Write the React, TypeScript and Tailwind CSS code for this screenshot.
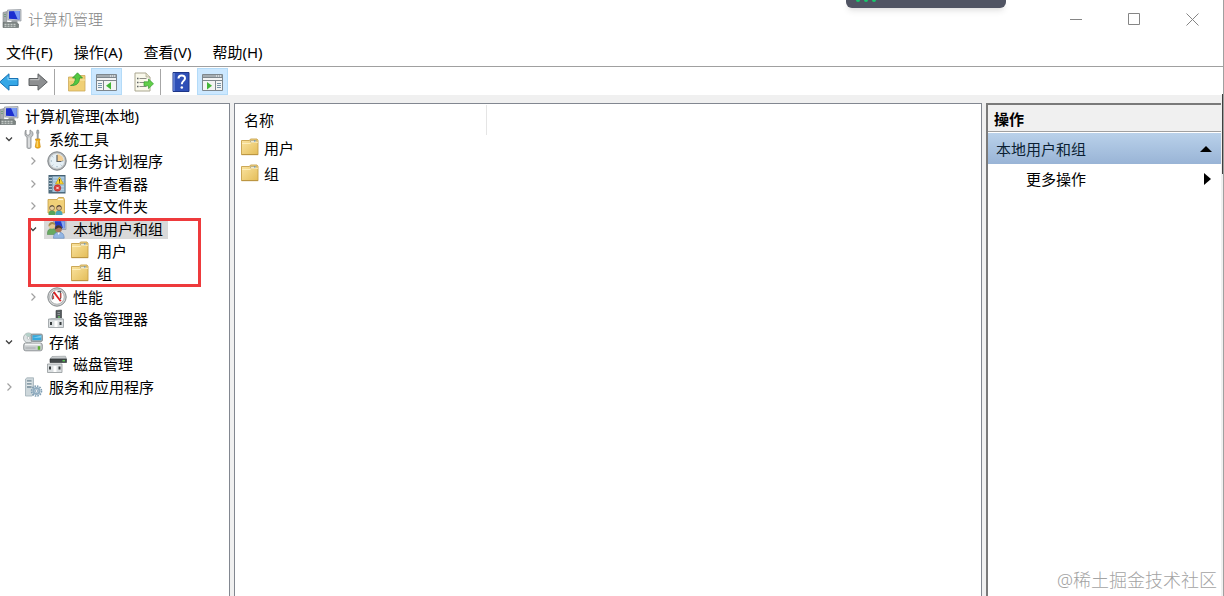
import React, { useState } from 'react';
import clsx from 'clsx';

type IconProps = { className?: string };

const ComputerIcon = ({ className }: IconProps) => (
  <svg viewBox="0 0 20 20" className={clsx('w-5 h-5', className)}>
    <path d="M1 3.5 5 2.5v10l-4 1z" fill="#a9adb0" stroke="#85898c" strokeWidth=".6" />
    <path d="M2 5.5h2M2 7.5h2" stroke="#6a9a75" strokeWidth=".8" />
    <path d="M5.5 1 19 .5v11.5L6 11z" fill="#c7ccd2" stroke="#8e949b" strokeWidth=".7" />
    <path d="M7 2.3 17.6 2v8.4L7 9.7z" fill="#1c2fd0" />
    <path d="M12 2.1 17.6 2v8.4l-2-.1z" fill="#7a9cf2" />
    <path d="M10 11.5h5l1 2h-7z" fill="#9da2a5" />
    <path d="M1 13.5h13.5l2 1.5v3.5H1z" fill="#7c8482" stroke="#5e6664" strokeWidth=".6" />
    <path d="M2.5 15.3h2m1 0h2m1 0h2m1 0h2M2.5 17.2h2m1 0h2m1 0h2m1 0h2" stroke="#d9dfdb" />
  </svg>
);

const ToolsIcon = () => (
  <svg viewBox="0 0 20 20" className="w-5 h-5">
    <path d="M3 1v4l2 1.5L7 5V1c2 1 3 2.3 3 4 0 1.5-.8 2.5-2 3.2V18c0 1-.8 1.700-2 1.700S4 19 4 18V8.200C2.700 7.500 2 6.500 2 5s0-3 1-4z" fill="#c3c6c8" stroke="#85898b" strokeWidth=".8" />
    <path d="M6 8.5V18" stroke="#f2f3f3" />
    <path d="M14 1h1.5l.5 3-.7 1v6h-1.2V5l-.6-1z" fill="#a2a8ab" stroke="#7d8386" strokeWidth=".5" />
    <path d="M12.5 10h4.500l-.6 2.500.9 5.500c0 1.500-5 1.500-5 0l.9-5.500z" fill="#f4b21c" stroke="#c98408" strokeWidth=".7" />
    <path d="M14.2 12v6" stroke="#ffe28c" />
  </svg>
);

const ClockIcon = () => (
  <svg viewBox="0 0 20 20" className="w-5 h-5">
    <circle cx="10" cy="10" r="9.200" fill="#b4b8bb" stroke="#7d8286" />
    <circle cx="10" cy="10" r="7.300" fill="#e6f0f6" stroke="#dcdfe1" strokeWidth=".8" />
    <path d="M10 10V3.200A6.800 6.800 0 0 1 16.800 10z" fill="#f4cf93" />
    <path d="M10 4v6.500h4.500" fill="none" stroke="#5c5f63" strokeWidth="1.200" />
    <path d="M3.800 10h1M10 16.200v-1M16.200 10h-1M5.600 5.600l.6.6M5.600 14.400l.6-.6M14.400 14.400l-.6-.6" stroke="#7d97a8" />
  </svg>
);

const EventIcon = () => (
  <svg viewBox="0 0 20 20" className="w-5 h-5">
    <rect x="2" y="1.500" width="16" height="17.500" fill="#56768b" stroke="#456173" />
    <rect x="5.500" y="2.500" width="12" height="15.500" fill="#b4d0e6" />
    <path d="M6 5h11M6 8h11M6 11h11M6 14h11M6 17h11" stroke="#87abc4" strokeWidth=".8" />
    <path d="M2 3.500h3M2 6.500h3M2 9.500h3M2 12.500h3M2 15.500h3" stroke="#b5c6d0" />
    <path d="m12.500 3 4 7h-8z" fill="#fad431" stroke="#b99211" strokeWidth=".6" />
    <path d="M12.500 5v2.700m0 .7v.8" stroke="#504312" />
    <circle cx="10.500" cy="14" r="3.300" fill="#db3a35" stroke="#a82723" strokeWidth=".5" />
    <path d="m9.300 12.800 2.400 2.400m0-2.400-2.400 2.400" stroke="#fff" strokeWidth=".9" />
  </svg>
);

const FolderIcon = ({ className }: IconProps) => (
  <svg viewBox="1 0 20 20" className={clsx('w-5 h-5', className)}>
    <defs>
      <linearGradient id="folder" x2="1" y2="1">
        <stop stopColor="#fbe5a3" />
        <stop offset="1" stopColor="#e4bd58" />
      </linearGradient>
    </defs>
    <path d="M1.500 2.500h8l1-1.500h6.500l1 1.500v14H1.500z" fill="url(#folder)" stroke="#c6a04a" strokeWidth=".9" />
    <path d="M10.500 2.500h6l-1 1.700h-5z" fill="#fcfaf0" stroke="#9e8d60" strokeWidth=".6" />
    <path d="m14.200 2.900 1 .2" stroke="#3887c9" strokeWidth="1.200" />
    <path d="M2 5.500h8l1.500-1.200H18" fill="none" stroke="#fff2c4" strokeWidth=".8" />
    <path d="M1.500 16.700h16.700" stroke="#b48c39" strokeWidth=".8" />
  </svg>
);

const SharedFolderIcon = () => (
  <svg viewBox="0 0 20 20" className="w-5 h-5">
    <path d="M1 3.500h9L11.500 1.500h5l1 2V17H1z" fill="#f1d078" stroke="#c49c43" strokeWidth=".8" />
    <path d="M11 3.500h5" stroke="#fff8de" strokeWidth="1.200" />
    <path d="M1.500 19c0-3.500 1.200-4.500 3.500-4.500s3.500 1 3.500 4.500z" fill="#58a35a" />
    <circle cx="5" cy="12" r="2.500" fill="#ead0a0" stroke="#766244" strokeWidth=".7" />
    <path d="M2.700 11.500c.6-3 3.800-3 4.600-.5l-2.200-.7z" fill="#5a4936" />
    <path d="M8.500 19c0-3.500 1.200-4.500 3.500-4.500s3.500 1 3.500 4.500z" fill="#4aa5ba" />
    <circle cx="12" cy="12" r="2.500" fill="#dcb88b" stroke="#644f39" strokeWidth=".7" />
    <path d="M9.700 11.500c.6-3 3.800-3 4.600-.5l-2.200-.7z" fill="#493a2e" />
  </svg>
);

const UsersIcon = () => (
  <svg viewBox="0 0 20 20" className="w-5 h-5">
    <path d="M6.500 1h12.500v9.500h-12z" fill="#b9c3d5" stroke="#8994a9" strokeWidth=".7" />
    <path d="M7.700 2.200h10v7h-10z" fill="#223ac9" />
    <path d="M14 2.200h3.700v7H16z" fill="#86a7ed" />
    <path d="M.3 15.500c0-4.500 2-6 4.700-6s4.700 1.500 4.700 6z" fill="#68aa60" stroke="#468247" strokeWidth=".5" />
    <circle cx="5" cy="6.500" r="3.200" fill="#e4c791" />
    <path d="M1.500 7.500C1 2 8 1.500 8.500 6L5 5z" fill="#a38a4e" />
    <path d="M6.500 19.300c0-4.500 2-6 5.300-6s5.400 1.500 5.400 6z" fill="#93b6e3" stroke="#5279b1" strokeWidth=".5" />
    <circle cx="11.500" cy="10" r="3.400" fill="#a97553" />
    <path d="M8 10.500c-.4-5.500 6.500-5.500 7.200-.5L12 8.500z" fill="#443731" />
    <path d="m10.500 13.500 1.200 2.500 1.200-2.500z" fill="#fff" />
  </svg>
);

const GaugeIcon = () => (
  <svg viewBox="0 0 20 20" className="w-5 h-5">
    <circle cx="10" cy="10" r="9.200" fill="#d0d2d3" stroke="#84898b" />
    <circle cx="10" cy="10" r="7.200" fill="#fff" stroke="#999d9e" strokeWidth=".7" />
    <path d="M5.500 12.500C4.600 9 6 6 8 5M10.500 4.700h3v7.500" fill="none" stroke="#596063" strokeWidth="1.200" />
    <path d="m6 5.500 1.600-1 7 9.500-1.800.5z" fill="#dd2222" />
    <path d="M6.500 12V8.500M13.800 6v5" stroke="#cf4a45" strokeWidth="1.200" />
  </svg>
);

const DeviceIcon = () => (
  <svg viewBox="0 0 20 20" className="w-5 h-5">
    <path d="M9 1.500 14.500 1v10H9z" fill="#555b5e" stroke="#363b3d" strokeWidth=".6" />
    <path d="M10.500 3.500h2.500M10.500 5.500h2.500" stroke="#8e9699" />
    <path d="M12 7v2" stroke="#69c565" strokeWidth="1.400" />
    <path d="M1.500 10h15v8.500h-15z" fill="#dce0e2" stroke="#969ca0" strokeWidth=".8" />
    <path d="M1.500 10.500 4.500 9H15l1.500 1.500" fill="#b4babd" />
    <path d="M4 13v3M13.500 13v3" stroke="#373c3e" strokeWidth="2" />
    <path d="M7.500 12h3v6h-3z" fill="#fff" />
  </svg>
);

const StorageIcon = () => (
  <svg viewBox="0 0 20 20" className="w-5 h-5">
    <circle cx="5.500" cy="6" r="5" fill="#dde2e3" stroke="#9da4a6" strokeWidth=".8" />
    <path d="M5.500 6 2 2.500A5 5 0 0 1 9 2.500z" fill="#b4cfc8" />
    <circle cx="5.500" cy="6" r="1.300" fill="#fff" stroke="#9da4a6" strokeWidth=".6" />
    <rect x="8" y="2" width="11.500" height="7.500" rx="1.500" fill="#a5adb0" stroke="#757f84" strokeWidth=".7" />
    <path d="M9.500 3.200h8.800v5H9.500z" fill="#35a9dd" />
    <path d="m9.500 6 8.800-2.500v2z" fill="#82d0f2" />
    <rect x=".7" y="11" width="18.600" height="7.800" rx="2" fill="#c9cdcf" stroke="#7e8486" strokeWidth=".8" />
    <path d="M2 12.500h15.500" stroke="#f3f5f5" strokeWidth="1.600" />
    <path d="M2.500 16h10" stroke="#a5aaac" />
    <path d="M16 14.200v3.600" stroke="#5cae32" strokeWidth="2.500" />
  </svg>
);

const DiskIcon = () => (
  <svg viewBox="0 0 20 20" className="w-5 h-5">
    <path d="m5 2.500 13.500-.3 1 2.800H3z" fill="#c7cbcd" stroke="#92989a" strokeWidth=".6" />
    <path d="M3 5h16.500v3.500H3z" fill="#44494b" stroke="#292d2f" strokeWidth=".6" />
    <path d="M15.500 6.700h2.500" stroke="#56c553" strokeWidth="1.500" />
    <path d="M.5 10h14.500v8.500H.5z" fill="#dce0e2" stroke="#92989b" strokeWidth=".8" />
    <path d="M3 12.500v3M12.500 12.500v3" stroke="#373c3e" strokeWidth="2" />
    <path d="M6.500 12h3v6h-3z" fill="#fff" />
  </svg>
);

const ServicesIcon = () => (
  <svg viewBox="0 0 20 20" className="w-5 h-5">
    <path d="M2.500 2 4 .8h6.500v17L9 19H2.500z" fill="#cdd7db" stroke="#a0afb6" strokeWidth=".8" />
    <path d="M4 4h4.500M4 7h4.500M4 10h4.500" stroke="#486778" strokeWidth="1.200" />
    <path d="M4 5.200h4.500M4 8.200h4.500" stroke="#fff" strokeWidth=".7" />
    <circle cx="13.500" cy="14" r="5" fill="none" stroke="#7f9eb4" strokeWidth="1.600" strokeDasharray="1.600 1" />
    <circle cx="13.500" cy="14" r="3" fill="#d1e0eb" stroke="#91adc0" strokeWidth="2" />
    <circle cx="13.500" cy="14" r="1.200" fill="#fff" stroke="#6e8ca2" strokeWidth=".6" />
  </svg>
);

const ArrowIcon = ({ back }: { back?: boolean }) => (
  <svg viewBox="0 0 20 20" className={clsx('w-5 h-5', back && 'rotate-180')}>
    <path
      d="M1 6.500h9V1.800L19.300 10 10 18.200v-4.700H1z"
      fill={back ? '#35a7e6' : '#8d8f91'}
      stroke={back ? '#1873b5' : '#5f6264'}
      strokeLinejoin="round"
    />
    <path d={back ? 'M2.200 12.300h8.800v3' : 'M2.200 7.700h8.800v-3'} fill="none" stroke={back ? '#8bd6fa' : '#c3c4c5'} />
  </svg>
);

const UpFolderIcon = () => (
  <svg viewBox="0 0 20 20" className="w-5 h-5">
    <path d="M1.500 5h6L9 3.500h9V19H1.500z" fill="#f0d075" stroke="#cba95a" strokeWidth=".8" />
    <path d="M2 8h16" stroke="#fae7a8" />
    <path d="M3.500 13.500C7 12.500 8.300 10 8.300 6H5.500L10.500.8 15.500 6h-3c0 5-3 8-9 7.500z" fill="#54c841" stroke="#2b9430" strokeWidth=".7" />
  </svg>
);

const PaneIcon = ({ right }: { right?: boolean }) => (
  <svg viewBox="0 0 21 20" className="w-[21px] h-5">
    <path d="M.5 2.500h20v16H.5z" fill="#f3f4f4" stroke="#7e878d" />
    <path d="M1 3h19v2H1z" fill="#a5adb2" />
    <path d="M1 5.500h19M1 8.500h19" stroke="#7e878d" />
    <path d="M14 4h1m1 0h1m1 0h1" stroke="#fff" />
    {right ? (
      <g>
        <path d="M13.500 9v9" stroke="#7e878d" />
        <path d="M15 11.500h4M15 13.500h4M15 15.500h4" stroke="#7795aa" />
        <path d="m5 10 5 3.700L5 17.400z" fill="#43b637" />
      </g>
    ) : (
      <g>
        <path d="M7.500 9v9" stroke="#7e878d" />
        <path d="M2 11.500h4M2 13.500h4M2 15.500h4" stroke="#7795aa" />
        <path d="m15 10-5 3.700 5 3.700z" fill="#43b637" />
      </g>
    )}
  </svg>
);

const ExportIcon = () => (
  <svg viewBox="0 0 20 20" className="w-5 h-5">
    <path d="M1 1h11l4 4v14H1z" fill="#faf9ec" stroke="#aaa68f" />
    <path d="M12 1v4h4" fill="#e5e2cc" stroke="#aaa68f" strokeWidth=".7" />
    <path d="M3 6.500h1.500M3 10.500h1.500M3 14.500h1.500" stroke="#5e6264" strokeWidth="1.300" />
    <path d="M5.500 6.500h7M5.500 10.500h6M5.500 14.500h7" stroke="#8d8c86" />
    <path d="M10 9.800h4.500V7l5 4.800-5 4.800v-2.800H10z" fill="#61cf48" stroke="#379d32" strokeWidth=".7" />
  </svg>
);

const HelpIcon = () => (
  <svg viewBox="0 0 20 20" className="w-5 h-5">
    <path d="M2 .5h16v19H2z" fill="#2f50b7" stroke="#1d3588" />
    <path d="M3 1v18" stroke="#6b88d9" strokeWidth="1.500" />
    <path d="M7.500 6.500c0-4 6.500-4 6.500-.3 0 2.600-3.200 2.800-3.200 6" fill="none" stroke="#fff" strokeWidth="2" />
    <circle cx="10.800" cy="15.500" r="1.300" fill="#fff" />
  </svg>
);

type TreeItem = {
  label: string;
  level: number;
  icon: React.ReactNode;
  state?: 'open' | 'closed';
};

const indent = ['', 'pl-0', 'pl-6', 'pl-12'];

const treeItems: TreeItem[] = [
  { label: '计算机管理(本地)', level: 0, icon: <ComputerIcon /> },
  { label: '系统工具', level: 1, icon: <ToolsIcon />, state: 'open' },
  { label: '任务计划程序', level: 2, icon: <ClockIcon />, state: 'closed' },
  { label: '事件查看器', level: 2, icon: <EventIcon />, state: 'closed' },
  { label: '共享文件夹', level: 2, icon: <SharedFolderIcon />, state: 'closed' },
  { label: '本地用户和组', level: 2, icon: <UsersIcon />, state: 'open' },
  { label: '用户', level: 3, icon: <FolderIcon /> },
  { label: '组', level: 3, icon: <FolderIcon /> },
  { label: '性能', level: 2, icon: <GaugeIcon />, state: 'closed' },
  { label: '设备管理器', level: 2, icon: <DeviceIcon /> },
  { label: '存储', level: 1, icon: <StorageIcon />, state: 'open' },
  { label: '磁盘管理', level: 2, icon: <DiskIcon /> },
  { label: '服务和应用程序', level: 1, icon: <ServicesIcon />, state: 'closed' },
];

const Chevron = ({ state }: { state: 'open' | 'closed' }) => (
  <svg viewBox="0 0 10 10" className="w-2.5 h-2.5" fill="none">
    {state === 'open' ? (
      <path d="m2 3.500 3 3 3-3" stroke="#404040" strokeWidth="1.300" />
    ) : (
      <path d="m3.500 1.500 3.500 3.500-3.500 3.500" stroke="#a0a0a0" strokeWidth="1.200" />
    )}
  </svg>
);

const Tree = () => {
  const [selected, setSelected] = useState(5);

  return (
    <nav aria-label="控制台树" className="relative w-[230px] shrink-0 overflow-hidden bg-white border-t border-r border-[#828790]">
      <ul className="grid auto-rows-fr h-[293px] mt-px">
        {treeItems.map((item, i) => (
          <li key={i} className={clsx('flex items-center', indent[item.level])}>
            {item.level > 0 && (
              <span className="flex w-5 shrink-0 pl-1">
                {item.state && (
                  <button aria-label={item.state === 'open' ? '折叠' : '展开'}>
                    <Chevron state={item.state} />
                  </button>
                )}
              </span>
            )}
            <button
              onClick={() => setSelected(i)}
              className={clsx(
                'flex items-center gap-1.5 h-5 pr-[5px] whitespace-nowrap',
                item.level > 0 ? 'pl-[3px]' : '-ml-px',
                selected === i && 'bg-[#d9d9d9]'
              )}
            >
              {item.icon}
              {item.label}
            </button>
          </li>
        ))}
      </ul>
      {/* Highlight around the users and groups branch */}
      <div className="absolute left-7 top-[114px] w-[173px] h-[69px] border-3 border-[#ee3a3c] pointer-events-none" />
    </nav>
  );
};

const Separator = () => <div className="w-px h-[26px] mx-0.5 bg-[#a6a6a6]" />;

const toolButton = 'flex items-center justify-center h-7 w-7 shrink-0';
const activeTool = 'flex items-center justify-center h-[27px] w-[31px] shrink-0 bg-[#cce8ff] border border-[#b4dbf8]';

const Toolbar = () => (
  <div className="flex items-center h-7 pt-px bg-white">
    <button aria-label="后退" className="flex items-center w-[25px] h-7 -ml-px"><ArrowIcon back /></button>
    <button aria-label="前进" className={toolButton}><ArrowIcon /></button>
    <Separator />
    <div className="flex items-center pl-1.5">
      <button aria-label="上一级" className={toolButton}><UpFolderIcon /></button>
      <button aria-label="显示/隐藏控制台树" className={activeTool}><PaneIcon /></button>
      <button aria-label="导出列表" className={clsx(toolButton, 'ml-2')}><ExportIcon /></button>
    </div>
    <Separator />
    <div className="flex items-center pl-1 gap-0.5">
      <button aria-label="帮助" className={toolButton}><HelpIcon /></button>
      <button aria-label="显示/隐藏操作窗格" className={activeTool}><PaneIcon right /></button>
    </div>
  </div>
);

const TitleBar = () => (
  <header className="flex items-center h-[38px] pl-0.5 pr-0.5 bg-white">
    <ComputerIcon />
    <h1 className="ml-1.5 font-light text-[#858585]">计算机管理</h1>
    <div className="ml-auto flex text-[#858585]">
      <button aria-label="最小化" className="flex justify-center w-[58px]">
        <svg viewBox="0 0 13 13" className="w-[13px] h-[13px]" fill="none" stroke="currentColor"><path d="M0 6.500h12" /></svg>
      </button>
      <button aria-label="最大化" className="flex justify-center w-[58px]">
        <svg viewBox="0 0 13 13" className="w-[13px] h-[13px]" fill="none" stroke="currentColor"><path d="M.5.500h11v11H.5z" /></svg>
      </button>
      <button aria-label="关闭" className="flex justify-center w-[58px]">
        <svg viewBox="0 0 13 13" className="w-[13px] h-[13px]" fill="none" stroke="currentColor"><path d="m.5.500 12 12m0-12-12 12" /></svg>
      </button>
    </div>
  </header>
);

const menus = ['文件(F)', '操作(A)', '查看(V)', '帮助(H)'];

const MenuBar = () => (
  <div className="flex items-center gap-[21px] h-7 pl-1.5 bg-white">
    {menus.map((menu) => (
      <button key={menu} className="whitespace-nowrap">{menu}</button>
    ))}
  </div>
);

const ListPane = () => (
  <main className="flex-1 min-w-0 bg-white border-t border-x border-[#828790]">
    <table className="border-collapse mt-px">
      <thead>
        <tr className="h-[30px]">
          <th className="w-[251px] pl-[9px] p-0 text-left font-normal border-r border-[#e5e5e5]">名称</th>
        </tr>
      </thead>
      <tbody>
        {['用户', '组'].map((name) => (
          <tr key={name} className="h-[26px]">
            <td className="p-0 pl-1.5">
              <div className="flex items-center gap-[3px]">
                <FolderIcon />
                {name}
              </div>
            </td>
          </tr>
        ))}
      </tbody>
    </table>
  </main>
);

const ActionsPane = () => (
  <aside className="w-[235px] shrink-0 bg-white border-t-2 border-l-2 border-[#7a7a7a]">
    <h2 className="flex items-center h-[27px] pl-1.5 pt-0.5 font-bold bg-[#f0f0f0] border-b border-[#a0a0a0]">操作</h2>
    <button className="flex items-center justify-between w-full h-[31px] mt-px pl-2 pr-[9px] text-[#0b1f33] bg-linear-to-b from-[#b9d1ea] to-[#99b4d6]">
      本地用户和组
      <svg viewBox="0 0 12 6" className="w-3 h-1.5"><path d="M0 6 6 0l6 6z" fill="#000" /></svg>
    </button>
    <button className="flex items-center justify-between w-full h-[30px] pl-[38px] pr-2.5">
      更多操作
      <svg viewBox="0 0 7 12" className="w-[7px] h-3"><path d="m0 0 7 6-7 6z" fill="#000" /></svg>
    </button>
  </aside>
);

export default function App() {
  return (
    <div className="relative flex flex-col min-h-screen overflow-hidden bg-[#f0f0f0] border-r border-[#a0a0a0] text-[15px] leading-5 text-black font-['Noto_Sans','Noto_Sans_CJK_SC',sans-serif]">
      <TitleBar />
      <MenuBar />
      <div className="border-t border-[#a0a0a0]">
        <Toolbar />
      </div>

      <div className="flex flex-1 gap-1 pt-2 pr-0.5">
        <Tree />
        <ListPane />
        <ActionsPane />
      </div>

      {/* Edge of the floating recorder bar */}
      <div className="absolute top-0 right-[217px] flex gap-1 w-40 h-2 pl-2.5 rounded-b-md bg-[#505463] shadow-md">
        <span className="w-1 h-0.5 rounded-b-full bg-[#16c86b]" />
        <span className="w-1 h-0.5 rounded-b-full bg-[#16c86b]" />
        <span className="w-1 h-0.5 rounded-b-full bg-[#16c86b]" />
      </div>

      {/* Dark sliver of the window behind */}
      <div className="absolute top-[94px] right-0 w-px h-20 bg-[#404040]" />

      <div className="absolute right-1.5 bottom-1.5 text-lg leading-5 font-light text-[#a3a3a3] whitespace-nowrap">@稀土掘金技术社区</div>
    </div>
  );
}
